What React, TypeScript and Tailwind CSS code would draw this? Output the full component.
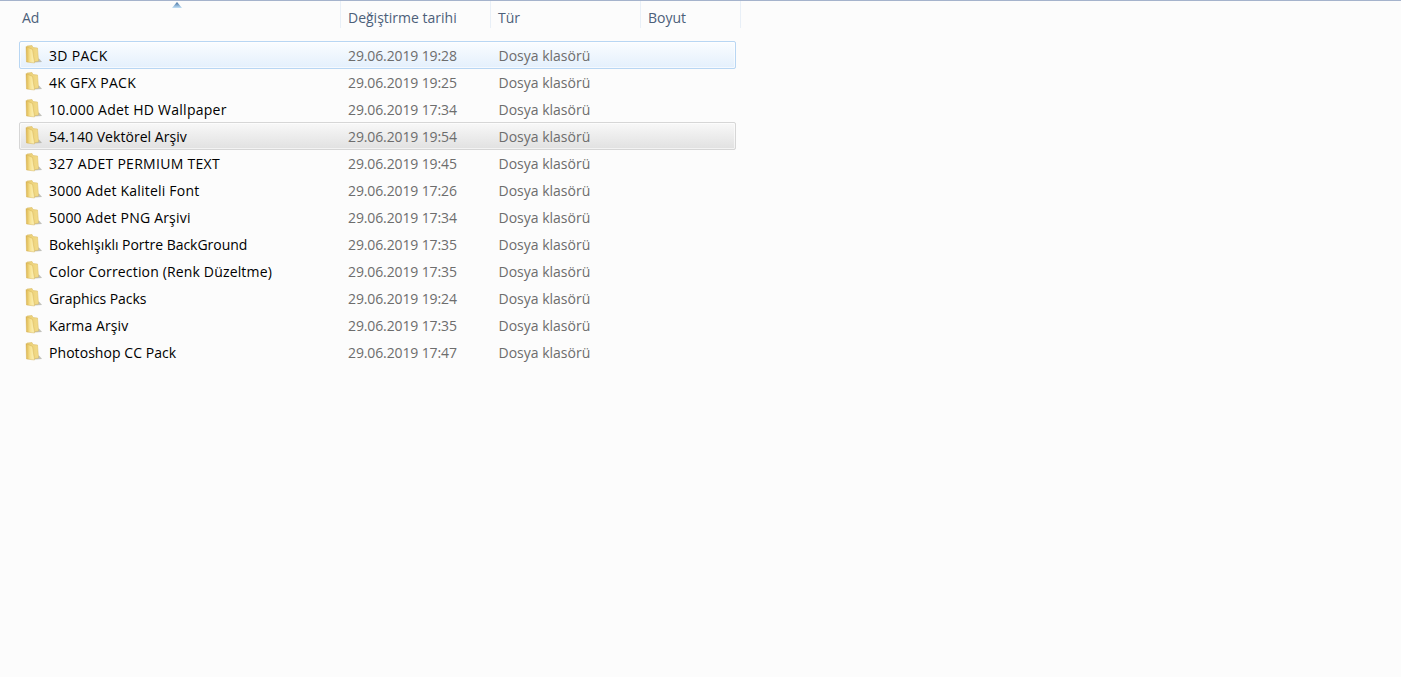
const files = [
  { name: "3D PACK", date: "29.06.2019 19:28", state: "hover", tracking: "tracking-[0.3px]" },
  { name: "4K GFX PACK", date: "29.06.2019 19:25", tracking: "tracking-[0.27px]" },
  { name: "10.000 Adet HD Wallpaper", date: "29.06.2019 17:34", tracking: "tracking-[0.25px]" },
  { name: "54.140 Vektörel Arşiv", date: "29.06.2019 19:54", state: "selected", tracking: "tracking-[0.05px]" },
  { name: "327 ADET PERMIUM TEXT", date: "29.06.2019 19:45", tracking: "tracking-[0.29px]" },
  { name: "3000 Adet Kaliteli Font", date: "29.06.2019 17:26", tracking: "tracking-[0.2px]" },
  { name: "5000 Adet PNG Arşivi", date: "29.06.2019 17:34", tracking: "tracking-[0.2px]" },
  { name: "BokehIşıklı Portre BackGround", date: "29.06.2019 17:35", tracking: "tracking-[-0.03px]" },
  { name: "Color Correction (Renk Düzeltme)", date: "29.06.2019 17:35", tracking: "tracking-[0.16px]" },
  { name: "Graphics Packs", date: "29.06.2019 19:24", tracking: "tracking-[-0.07px]" },
  { name: "Karma Arşiv", date: "29.06.2019 17:35", tracking: "tracking-[0.09px]" },
  { name: "Photoshop CC Pack", date: "29.06.2019 17:47", tracking: "tracking-[0.06px]" },
];

function FolderIcon() {
  return (
    <svg width="18" height="19" viewBox="0 0 18 19" className="-mt-[2px] shrink-0">
      <defs>
        <linearGradient id="flap" x1="0" y1="0" x2="1" y2="0">
          <stop offset="0" stopColor="#dcb44c" />
          <stop offset="0.45" stopColor="#f6e08c" />
          <stop offset="1" stopColor="#fdf3bd" />
        </linearGradient>
        <linearGradient id="back" x1="0" y1="0" x2="1" y2="0">
          <stop offset="0" stopColor="#e8cb70" />
          <stop offset="1" stopColor="#f3dc8a" />
        </linearGradient>
      </defs>
      <path d="M9 17.5 L17 17 L14.5 14 L12 13 Z" fill="#a8a8a0" opacity="0.7" />
      <path d="M2 1 L7 0.5 L8 2.5 L12.5 3 L13.5 16 L8 17 Z" fill="url(#back)" stroke="#d8b95e" strokeWidth="0.5" />
      <path d="M1 1.5 L7.5 4.5 L9.5 18 L1.5 17 Z" fill="url(#flap)" stroke="#cfa94a" strokeWidth="0.4" />
    </svg>
  );
}

function HeaderCell({ label, width }: { label: string; width: string }) {
  return (
    <div className={`${width} flex h-[27px] items-center border-r border-[#e8eff7] pl-[7px] pt-[6px] text-[14px] text-[#4c607a]`}>
      {label}
    </div>
  );
}

export default function App() {
  return (
    <div className="relative h-[677px] w-[1401px] overflow-hidden border-t border-[#a5b3cc] bg-[#fcfcfc] font-['Open_Sans','Noto_Sans',sans-serif]">
      {/* sort arrow */}
      <svg width="10" height="6" viewBox="0 0 10 6" className="absolute left-[172px] top-[1px]">
        <defs>
          <linearGradient id="arrow" x1="0" y1="0" x2="0" y2="1">
            <stop offset="0" stopColor="#3f6d9e" />
            <stop offset="1" stopColor="#c3e2f8" />
          </linearGradient>
        </defs>
        <path d="M5 0 L10 6 L0 6 Z" fill="url(#arrow)" />
      </svg>

      <div className="flex">
        <div className="flex h-[27px] w-[341px] items-center border-r border-[#e8eff7] pl-[22px] pt-[6px] text-[14px] text-[#4c607a]">
          Ad
        </div>
        <HeaderCell label="Değiştirme tarihi" width="w-[150px]" />
        <HeaderCell label="Tür" width="w-[150px]" />
        <HeaderCell label="Boyut" width="w-[100px]" />
      </div>

      <div className="ml-[19px] mt-[13px] w-[717px]">
        {files.map((f) => (
          <div
            key={f.name}
            className={
              f.state === "hover"
                ? "flex h-[28px] items-center rounded-[2px] border border-[#b8d6f3] bg-gradient-to-b from-[#fafdff] to-[#e4f0fc] pl-[5px] shadow-[inset_0_0_0_1px_#ffffff99]"
                : f.state === "selected"
                  ? "-mt-px flex h-[28px] items-center rounded-[2px] border border-[#d6d6d6] bg-gradient-to-b from-[#f8f8f8] to-[#e1e1e1] pl-[5px] shadow-[inset_0_0_0_1px_#ffffff99]"
                  : "flex h-[27px] items-center border border-transparent pl-[5px]"
            }
          >
            <FolderIcon />
            <span className={`ml-[6px] w-[299px] text-[14px] text-black ${f.tracking}`}>{f.name}</span>
            <span className="w-[150.5px] text-[14px] tracking-[-0.12px] text-[#6d6d6d]">{f.date}</span>
            <span className="text-[14px] text-[#6d6d6d]">Dosya klasörü</span>
          </div>
        ))}
      </div>
    </div>
  );
}
